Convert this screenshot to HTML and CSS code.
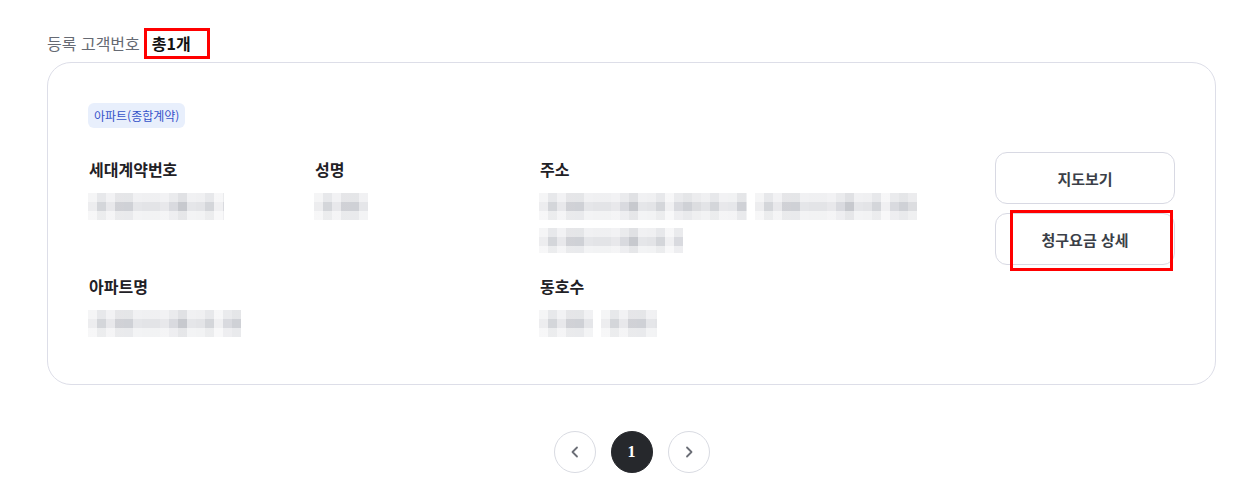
FILE: index.html
```html
<!DOCTYPE html>
<html lang="ko">
<head>
<meta charset="utf-8">
<title>등록 고객번호</title>
<link rel="stylesheet" href="styles.css">
</head>
<body>
<div class="page">
  <div class="summary">
    <span class="summary-label">등록 고객번호</span>
    <span class="summary-count mark">총1개</span>
  </div>

  <div class="card">
    <div class="info">
      <span class="badge">아파트(종합계약)</span>
      <div class="fields">
        <div class="field">
          <div class="label">세대계약번호</div>
          <div class="value"><span class="mosaic" style="width:136px"></span></div>
        </div>
        <div class="field">
          <div class="label">성명</div>
          <div class="value"><span class="mosaic" style="width:54px"></span></div>
        </div>
        <div class="field">
          <div class="label">주소</div>
          <div class="value">
            <span class="mosaic" style="width:208px"></span><span class="mosaic" style="width:162px"></span>
          </div>
          <div class="value value-line"><span class="mosaic" style="width:144px"></span></div>
        </div>
        <div class="field">
          <div class="label">아파트명</div>
          <div class="value"><span class="mosaic" style="width:153px"></span></div>
        </div>
        <div class="field field-empty"></div>
        <div class="field">
          <div class="label">동호수</div>
          <div class="value"><span class="mosaic" style="width:54px"></span><span class="mosaic" style="width:56px"></span></div>
        </div>
      </div>
    </div>
    <div class="actions">
      <button class="btn" type="button">지도보기</button>
      <button class="btn mark-btn" type="button">청구요금 상세</button>
    </div>
  </div>

  <nav class="pager">
    <button class="page-btn" type="button" aria-label="이전">
      <svg width="14" height="14" viewBox="0 0 14 14"><path d="M9 2.5 L4.5 7 L9 11.5" fill="none" stroke="#6b6e76" stroke-width="1.8" stroke-linecap="round" stroke-linejoin="round"/></svg>
    </button>
    <button class="page-btn page-current" type="button">1</button>
    <button class="page-btn" type="button" aria-label="다음">
      <svg width="14" height="14" viewBox="0 0 14 14"><path d="M5 2.5 L9.5 7 L5 11.5" fill="none" stroke="#6b6e76" stroke-width="1.8" stroke-linecap="round" stroke-linejoin="round"/></svg>
    </button>
  </nav>
</div>
</body>
</html>
```
FILE: styles.css
```css
*, *::before, *::after { box-sizing: border-box; }
html, body { margin: 0; padding: 0; background: #fff; }
body {
  font-family: "Noto Sans CJK KR", "Noto Sans", sans-serif;
  color: #222;
}
.page {
  margin: 0 38px 0 47px;
  padding-top: 32px;
}
.summary {
  display: flex;
  align-items: center;
  gap: 12px;
  height: 22px;
  line-height: 22px;
  margin-bottom: 8px;
}
.summary-label {
  font-size: 16px;
  color: #666a73;
}
.summary-count {
  font-size: 16px;
  font-weight: 700;
  color: #111;
}
.mark { position: relative; }
.mark::after {
  content: "";
  position: absolute;
  left: -8px;
  top: -4px;
  width: 66px;
  height: 31px;
  border: 3px solid #ff0000;
}

.card {
  display: flex;
  border: 1px solid #dddee8;
  border-radius: 24px;
  padding: 40px 40px 47px 40px;
}
.info { flex: 1; display: flex; flex-direction: column; align-items: flex-start; }
.badge {
  display: inline-block;
  height: 25px;
  line-height: 25px;
  padding: 0 6px;
  border-radius: 6px;
  background: #e8effc;
  color: #3553c9;
  font-size: 12px;
  margin-bottom: 30px;
}
.fields {
  display: grid;
  grid-template-columns: 226px 225px 1fr;
  row-gap: 22px;
  width: 100%;
}
.label {
  font-size: 16px;
  font-weight: 700;
  line-height: 22px;
  color: #1f2126;
  margin-bottom: 13px;
  padding-left: 1px;
}
.value { display: flex; height: 27px; }
.value-line { margin-top: 8px; height: 25px; }
.mosaic {
  display: block;
  height: 100%;
  margin-right: 8px;
  background-image:
    linear-gradient(to bottom, rgba(255,255,255,0.45) 0 9px, rgba(255,255,255,0) 9px 18px, rgba(255,255,255,0.55) 18px 100%),
    repeating-linear-gradient(to right, rgba(255,255,255,0.35) 0 9px, rgba(255,255,255,0) 9px 27px, rgba(0,0,0,0.04) 27px 36px, rgba(255,255,255,0) 36px 63px),
    repeating-linear-gradient(to right, #e3e4e7 0 9px, #d4d6da 9px 18px, #e8e8eb 18px 27px, #d9dadf 27px 36px, #cfd1d6 36px 45px, #e5e6e9 45px 54px);
}
.mosaic:last-child { margin-right: 0; }

.actions {
  display: flex;
  flex-direction: column;
  gap: 9px;
  width: 180px;
  padding-top: 49px;
}
.btn {
  width: 180px;
  height: 52px;
  border: 1px solid #d8d9e3;
  border-radius: 12px;
  background: #fff;
  font-family: inherit;
  font-size: 15px;
  font-weight: 700;
  color: #3b3f48;
  cursor: pointer;
}
.mark-btn { position: relative; }
.mark-btn::after {
  content: "";
  position: absolute;
  left: 14px;
  top: -4px;
  width: 163px;
  height: 61px;
  border: 3px solid #ff0000;
}

.pager {
  display: flex;
  justify-content: center;
  gap: 15px;
  margin-top: 46px;
}
.page-btn {
  width: 42px;
  height: 42px;
  border-radius: 50%;
  border: 1px solid #d9dbe2;
  background: #fff;
  display: flex;
  align-items: center;
  justify-content: center;
  padding: 0;
  cursor: pointer;
}
.page-current {
  background: #26282c;
  border-color: #26282c;
  color: #fff;
  font-family: "Liberation Serif", serif;
  font-weight: 700;
  font-size: 16px;
}
```
